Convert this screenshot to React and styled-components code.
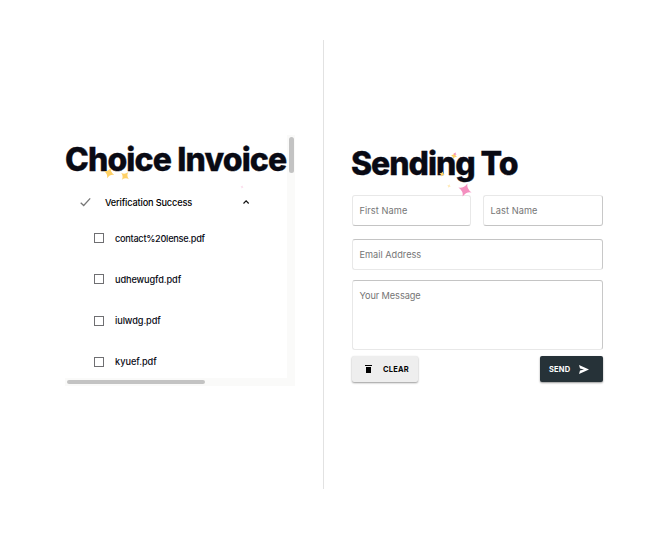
import React from "react";
import styled, { createGlobalStyle } from "styled-components";

const Global = createGlobalStyle`
  * { box-sizing: border-box; }
  body { margin: 0; background: #fff; color: #090a14; font-family: "Inter", sans-serif; overflow: hidden; }
`;
const Page = styled.main`display: grid; grid-template-columns: 323px 335px; width: 658px; height: 542px; padding-top: 40px;`;
const InvoicePane = styled.section`padding: 95px 0 0 65px; height: 449px;`;
const FormPane = styled.section`height: 449px; border-left: 1px solid #e2e2e2; padding: 99px 55px 0 27px;`;
const ScrollBox = styled.div`width: 230px; height: 251px; display: grid; grid-template: 243px 8px / 222px 8px;`;
const Content = styled.div`overflow: hidden;`;
const VerticalTrack = styled.div`background: #fafaf9; padding: 2px 1px 0 2px;`;
const HorizontalTrack = styled.div`grid-column: 1 / 3; background: #fafaf9; padding: 2px;`;
const Thumb = styled.div`background: #c3c3c3; border-radius: 3px; width: ${p => p.$w}px; height: ${p => p.$h}px;`;
const Title = styled.h1`
  margin: 0; padding-top: 1px; font-size: 32px; line-height: 48px; height: 49px;
  font-weight: 800; letter-spacing: ${p => p.$spacing}px; white-space: nowrap; position: relative;
  -webkit-text-stroke: 0.35px #090a14;
`;
const Summary = styled.div`height: 36px; display: flex; align-items: center; padding-left: 15px; font-size: 9.2px;`;
const SummaryText = styled.span`padding-left: 14px; flex: 0 0 151px; font-weight: 500; letter-spacing: -0.16px; color: #000;`;
const FileRow = styled.label`display: flex; align-items: center; gap: 11px; height: 41.3px; padding-left: 29px; font-size: 9.2px; font-weight: 500;`;
const FileList = styled.div`margin-top: -2.6px;`;
const Box = styled.span`width: 10px; height: 10px; border: 1px solid #6f6f72;`;
const Label = styled.span`letter-spacing: ${p => p.$spacing}px;`;
const Sparkles = styled.svg`position: absolute; left: 0; top: 0; overflow: visible; pointer-events: none;`;
const Fields = styled.form`display: grid; grid-template-columns: 119px 120px; column-gap: 12px; width: 251px; margin: 7px 0 0 1px;`;
const Field = styled.div`
  height: ${p => p.$h}px; border: 1px solid #c8c8c8; border-radius: 3px; padding: 9px 6.5px;
  border-color: ${p => p.$edges}; font-size: 9.2px; line-height: 12px; color: #757575;
  letter-spacing: ${p => p.$spacing || 0}px; margin-bottom: ${p => p.$gap}px;
  grid-column: ${p => p.$wide ? "1 / 3" : "auto"};
`;
const Actions = styled.div`display: flex; justify-content: space-between; width: 251px; margin-left: 1px;`;
const Button = styled.button`
  border: 0; border-radius: 2px; height: 26px; width: ${p => p.$w}px; display: flex; align-items: center;
  padding: 0 0 0 ${p => p.$pad}px; gap: ${p => p.$gap}px; font: 700 7.5px "Inter", sans-serif; letter-spacing: 0.2px;
  color: ${p => p.$dark ? "#fff" : "#050505"}; background: ${p => p.$dark ? "#263238" : "#eee"};
  box-shadow: 0 1px 2px #0006;
`;

const files = [["contact%20lense.pdf", -0.28], ["udhewugfd.pdf", -0.1], ["iulwdg.pdf", -0.1], ["kyuef.pdf", -0.03]];
const Star = ({ x, y, size, fill, turn = 15, opacity = 1 }) => (
  <path transform={`translate(${x} ${y}) rotate(${turn}) scale(${size})`} d="M0-1Q.12-.25 1 0Q.25.12 0 1Q-.12.25-1 0Q-.25-.12 0-1Z" fill={fill} opacity={opacity} />
);

export default function App() {
  return <><Global /><Page>
    <InvoicePane><ScrollBox>
      <Content>
        <Title $spacing={-0.86}>Choice Invoice
          <Sparkles width="222" height="60" strokeWidth="0">
            <Star x={44} y={38} size={5.5} fill="#ffd166" turn={20} />
            <Star x={60} y={41} size={5} fill="#ffd166" turn={40} />
            <Star x={177} y={52} size={1.5} fill="#f48fbf" opacity={0.35} />
          </Sparkles>
        </Title>
        <Summary>
          <svg width="11" height="10" viewBox="0 0 11 10"><path d="M.7 5.7l3 2.8L10.2 1.4" fill="none" stroke="#777" strokeWidth="1.3" /></svg>
          <SummaryText>Verification Success</SummaryText>
          <svg width="8" height="6"><path d="M1.5 4.5l2.6-2.6 2.6 2.6" fill="none" stroke="#111" strokeWidth="1.2" /></svg>
        </Summary>
        <FileList>{files.map(([name, spacing]) => <FileRow key={name}><Box /><Label $spacing={spacing}>{name}</Label></FileRow>)}</FileList>
      </Content>
      <VerticalTrack><Thumb $w={5} $h={36} /></VerticalTrack>
      <HorizontalTrack><Thumb $w={138} $h={4} /></HorizontalTrack>
    </ScrollBox></InvoicePane>
    <FormPane>
      <Title $spacing={-1.05}>Sending To
        <Sparkles width="166" height="60" strokeWidth="0">
          <Star x={103} y={17} size={3} fill="#ffd166" />
          <Star x={104} y={15} size={1.7} fill="#f48fbf" />
          <Star x={91} y={35} size={2.7} fill="#ffd166" />
          <Star x={98} y={47} size={1.8} fill="#ffd166" opacity={0.5} />
          <Star x={114} y={51} size={7} fill="#f48fbf" turn={20} />
        </Sparkles>
      </Title>
      <Fields>
        <Field $h={31} $gap={13} $edges="#e8e8e8 #e8e8e8 #c4c4c4 #e8e8e8" $spacing={0.08}>First Name</Field>
        <Field $h={31} $gap={13} $edges="#e8e8e8 #c8c8c8 #c4c4c4 #e8e8e8" $spacing={0.08}>Last Name</Field>
        <Field $wide $h={31} $gap={10} $edges="#c4c4c4 #c8c8c8 #e8e8e8 #e8e8e8">Email Address</Field>
        <Field $wide $h={70} $gap={6} $edges="#c4c4c4 #c8c8c8 #e8e8e8 #e8e8e8" $spacing={-0.08}>Your Message</Field>
      </Fields>
      <Actions>
        <Button $w={66} $pad={9} $gap={8}><svg width="14" height="12"><path d="M4 2h7v1H4zM5 4h5v6H5z" /></svg>CLEAR</Button>
        <Button $w={63} $pad={9} $gap={9} $dark>SEND<svg width="10" height="9"><path fill="#fff" d="M0 0l10 4.5L0 9l1-3.4 4-1.1-4-1.1z" /></svg></Button>
      </Actions>
    </FormPane>
  </Page></>;
}
